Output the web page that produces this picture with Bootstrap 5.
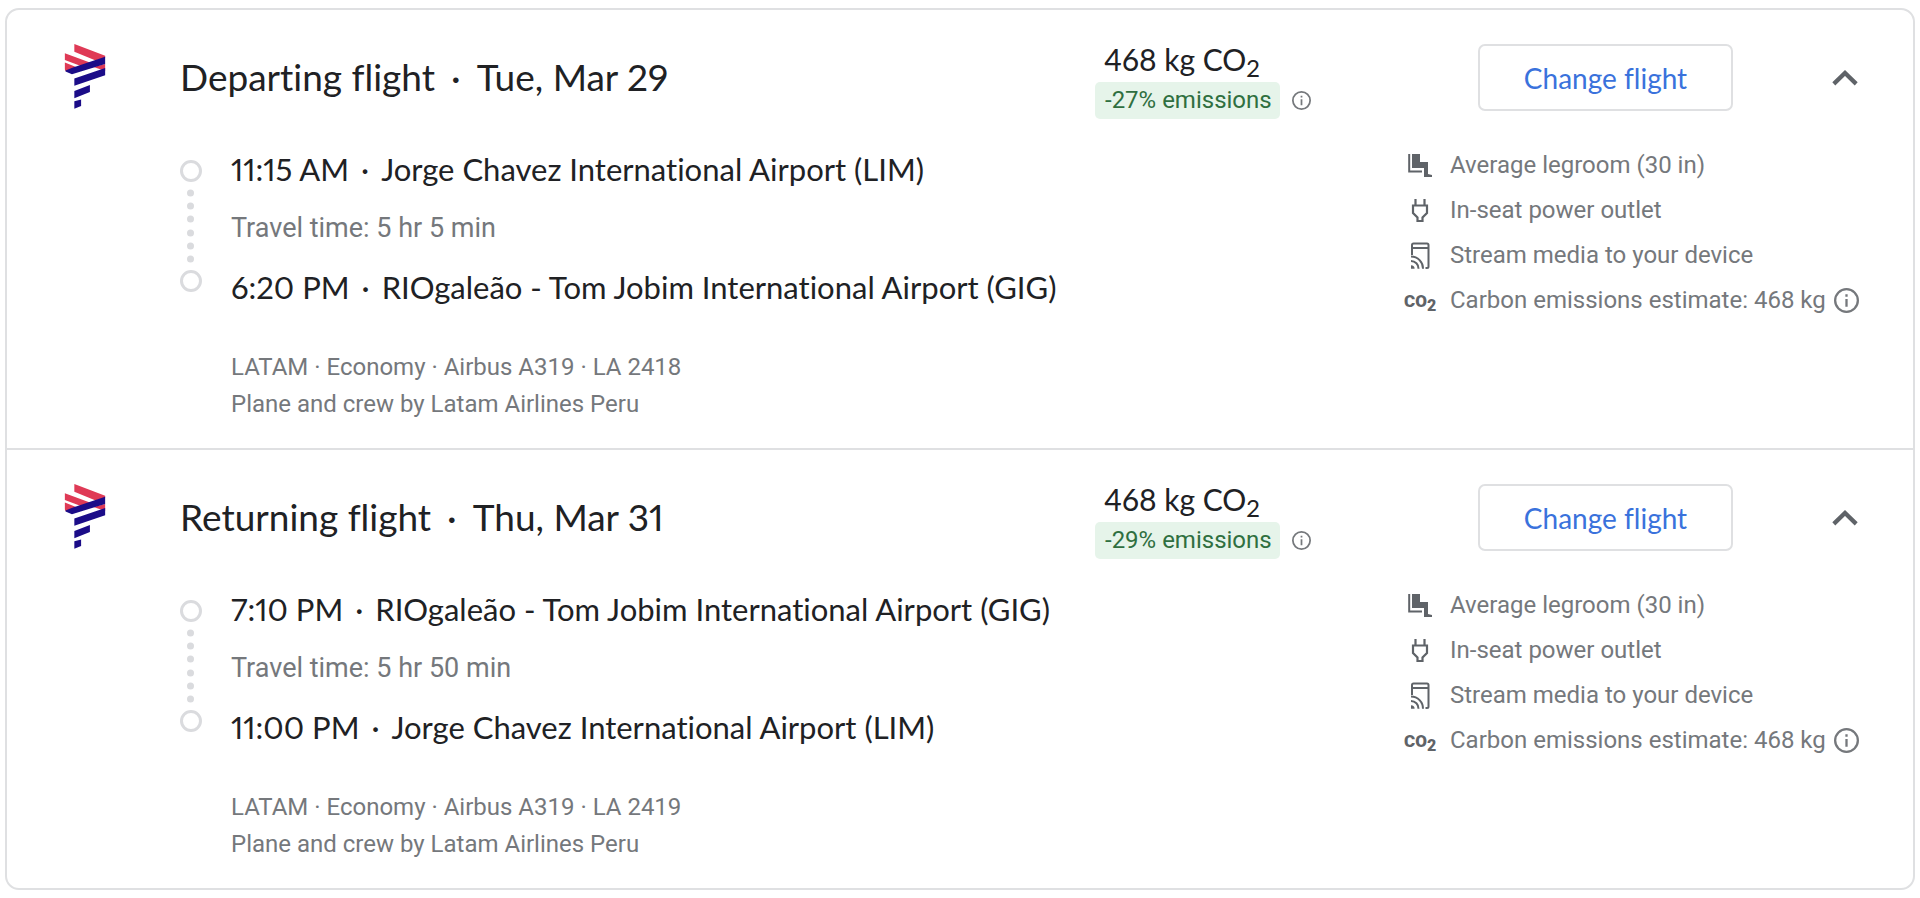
<!DOCTYPE html>
<html lang="en">
<head>
<meta charset="utf-8">
<meta name="viewport" content="width=device-width, initial-scale=1">
<title>Selected flights</title>
<link href="https://cdn.jsdelivr.net/npm/bootstrap@5.3.0/dist/css/bootstrap.min.css" rel="stylesheet">
<style>
  :root { --ink: #202124; --soft: #75787c; --icon: #5f6368; --line: #dfe0e2; --display: Lato, "Liberation Sans", sans-serif; }
  body { font-family: Roboto, "Liberation Sans", sans-serif; color: var(--soft); background: #fff; }
  .trip { margin: 8px 5px 9px; border: 2px solid var(--line); border-radius: 14px; }
  .leg { padding: 34px 0 25px 173px; }
  .leg + .leg { border-top: 2px solid var(--line); }
  .leg-head { margin-left: -116px; }
  .carrier { width: 116px; }
  .leg-title, .stop, .co2-amount, .change-btn { font-family: var(--display); font-variant-ligatures: none; font-variant-numeric: proportional-nums; }
  .leg-title { font-size: 37px; line-height: 65px; color: var(--ink); }
  .leg-title .sep { margin: 0 16px; }
  .co2-block { width: 383px; }
  .co2-amount { font-size: 30px; line-height: 30px; color: var(--ink); padding: 0 0 8px 9px; }
  .co2-amount sub { font-size: 24px; line-height: 0; bottom: -6px; }
  .saving { font-size: 24px; line-height: 37px; padding: 0 8px 0 10px; border-radius: 5px; background: #e6f4ea; color: #2f6f40; }
  .change-btn { width: 255px; height: 67px; font-size: 28px; line-height: 36px; color: #3a72dc; border: 2px solid var(--line); border-radius: 7px; }
  .change-btn:hover { background: #f6f9fe; color: #3a72dc; border-color: var(--line); }
  .fold-col { width: 180px; height: 67px; padding-left: 99px; }
  .leg-body { padding-top: 21px; }
  .route { list-style: none; }
  .stop { font-size: 31px; line-height: 59px; color: var(--ink); }
  .sep { margin: 0 12px; }
  .duration { font-size: 27px; line-height: 59px; }
  .track { width: 51px; padding-top: 20px; }
  .facts { font-size: 24px; line-height: 37px; margin: 32px 0 0 51px; }
  .amenities { width: 509px; padding-top: 3px; }
  .amenities li { font-size: 24px; line-height: 45px; }
  .amenity-icon { width: 32px; margin-right: 14px; color: var(--icon); }
  .co2-mark { font-weight: 900; font-size: 17px; line-height: 18px; }
  .co2-mark sub { font-size: 16px; line-height: 0; bottom: -4px; }
  .plain-btn { border: 0; background: none; padding: 0; color: inherit; line-height: 0; }
</style>
</head>
<body>
<svg class="d-none" aria-hidden="true">
  <symbol id="airline" viewBox="73 42 123 192">
    <path fill="#df3a56" d="M103 42 194 77V82L166 91 103 65ZM75 69 155 99 128 109 75 89ZM75 97 108 110 90 122H77L75 117ZM194 101V122L160 110Z"/>
    <path fill="#1b0c88" d="M194 80V101L96 131 77 123V120L97 112ZM194 113V134L103 165V144ZM149 163V184L103 202V181ZM123 206V225L103 233V211Z"/>
  </symbol>
  <symbol id="track" viewBox="0 0 22 132">
    <g fill="none" stroke="#dadbde" stroke-width="3"><circle cx="11" cy="11" r="9.5"/><circle cx="11" cy="121" r="9.5"/></g>
    <g fill="#dadbde"><circle cx="10.500" cy="33" r="3.500"/><circle cx="10.500" cy="46" r="3.500"/><circle cx="10.500" cy="59" r="3.500"/><circle cx="10.500" cy="73" r="3.500"/><circle cx="10.500" cy="86" r="3.500"/><circle cx="10.500" cy="99" r="3.500"/></g>
  </symbol>
  <symbol id="info" viewBox="0 0 24 24">
    <circle cx="12" cy="12" r="10.900" fill="none" stroke="currentColor" stroke-width="2.200"/><path fill="currentColor" d="M10.900 6h2.200v2.300h-2.200zM10.900 10.500h2.200v7.500h-2.200z"/>
  </symbol>
  <symbol id="chevron" viewBox="0 0 24 15"><path fill="none" stroke="currentColor" stroke-width="4" d="M1.500 13 12 2.800 22.500 13"/></symbol>
  <symbol id="seat" viewBox="0 0 24 24">
    <path fill="none" stroke="currentColor" stroke-width="2" d="M1.200 0V17.500H14"/><path fill="currentColor" d="M4 0H12V8H20V20L24 21V23H16V14H4Z"/>
  </symbol>
  <symbol id="plug" viewBox="0 0 24 24">
    <path fill="none" stroke="currentColor" stroke-width="2.200" d="M7.500 0V6.500M16.500 0V6.500M5 6.500H19V14L14.500 18.500V22H9.500V18.500L5 14Z"/>
  </symbol>
  <symbol id="stream" viewBox="0 0 20 28">
    <path fill="none" stroke="currentColor" stroke-width="2" d="M2 13V3Q2 1.500 3.500 1.500H17Q18.500 1.500 18.500 3V24.500Q18.500 26 17 26H15.500M2 6H18.500M1 14.500A12 12 0 0 1 13 26.800M1 19A7.500 7.500 0 0 1 8.500 26.800"/><path fill="currentColor" d="M1 23.200A3.600 3.600 0 0 1 4.600 26.800H1Z"/>
  </symbol>
</svg>

<main class="trip">
  <section class="leg">
    <header class="leg-head d-flex align-items-start">
      <div class="carrier flex-shrink-0"><svg width="42" height="65" role="img" aria-label="LATAM"><use href="#airline"/></svg></div>
      <h2 class="leg-title flex-grow-1 fw-normal m-0">Departing flight<span class="sep">·</span>Tue, Mar 29</h2>
      <div class="co2-block flex-shrink-0">
        <div class="co2-amount">468 kg CO<sub>2</sub></div>
        <div class="d-flex align-items-center gap-2"><span class="saving">-27% emissions</span><button class="plain-btn ms-1" type="button" aria-label="About emissions"><svg width="19" height="19"><use href="#info"/></svg></button></div>
      </div>
      <button class="btn change-btn flex-shrink-0" type="button">Change flight</button>
      <div class="fold-col d-flex align-items-center flex-shrink-0"><button class="plain-btn" type="button" aria-label="Collapse departing flight"><svg width="26" height="16" color="#5f6368"><use href="#chevron"/></svg></button></div>
    </header>
    <div class="leg-body d-flex">
      <div class="flex-grow-1">
        <div class="d-flex">
          <div class="track flex-shrink-0"><svg class="d-block" width="22" height="132" aria-hidden="true"><use href="#track"/></svg></div>
          <ul class="route p-0 m-0">
            <li class="stop">11:15 AM<span class="sep">·</span>Jorge Chavez International Airport (LIM)</li>
            <li class="duration">Travel time: 5 hr 5 min</li>
            <li class="stop">6:20 PM<span class="sep">·</span>RIOgaleão - Tom Jobim International Airport (GIG)</li>
          </ul>
        </div>
        <div class="facts">LATAM · Economy · Airbus A319 · LA 2418<br>Plane and crew by Latam Airlines Peru</div>
      </div>
      <ul class="amenities list-unstyled flex-shrink-0 mb-0">
        <li class="d-flex align-items-center"><span class="amenity-icon d-flex justify-content-center"><svg width="24" height="24"><use href="#seat"/></svg></span>Average legroom (30 in)</li>
        <li class="d-flex align-items-center"><span class="amenity-icon d-flex justify-content-center"><svg width="24" height="24"><use href="#plug"/></svg></span>In-seat power outlet</li>
        <li class="d-flex align-items-center"><span class="amenity-icon d-flex justify-content-center"><svg width="20" height="28"><use href="#stream"/></svg></span>Stream media to your device</li>
        <li class="d-flex align-items-center"><span class="amenity-icon co2-mark">CO<sub>2</sub></span>Carbon emissions estimate: 468 kg<button class="plain-btn ms-2" type="button" aria-label="About this estimate"><svg width="25" height="25"><use href="#info"/></svg></button></li>
      </ul>
    </div>
  </section>

  <section class="leg">
    <header class="leg-head d-flex align-items-start">
      <div class="carrier flex-shrink-0"><svg width="42" height="65" role="img" aria-label="LATAM"><use href="#airline"/></svg></div>
      <h2 class="leg-title flex-grow-1 fw-normal m-0">Returning flight<span class="sep">·</span>Thu, Mar 31</h2>
      <div class="co2-block flex-shrink-0">
        <div class="co2-amount">468 kg CO<sub>2</sub></div>
        <div class="d-flex align-items-center gap-2"><span class="saving">-29% emissions</span><button class="plain-btn ms-1" type="button" aria-label="About emissions"><svg width="19" height="19"><use href="#info"/></svg></button></div>
      </div>
      <button class="btn change-btn flex-shrink-0" type="button">Change flight</button>
      <div class="fold-col d-flex align-items-center flex-shrink-0"><button class="plain-btn" type="button" aria-label="Collapse returning flight"><svg width="26" height="16" color="#5f6368"><use href="#chevron"/></svg></button></div>
    </header>
    <div class="leg-body d-flex">
      <div class="flex-grow-1">
        <div class="d-flex">
          <div class="track flex-shrink-0"><svg class="d-block" width="22" height="132" aria-hidden="true"><use href="#track"/></svg></div>
          <ul class="route p-0 m-0">
            <li class="stop">7:10 PM<span class="sep">·</span>RIOgaleão - Tom Jobim International Airport (GIG)</li>
            <li class="duration">Travel time: 5 hr 50 min</li>
            <li class="stop">11:00 PM<span class="sep">·</span>Jorge Chavez International Airport (LIM)</li>
          </ul>
        </div>
        <div class="facts">LATAM · Economy · Airbus A319 · LA 2419<br>Plane and crew by Latam Airlines Peru</div>
      </div>
      <ul class="amenities list-unstyled flex-shrink-0 mb-0">
        <li class="d-flex align-items-center"><span class="amenity-icon d-flex justify-content-center"><svg width="24" height="24"><use href="#seat"/></svg></span>Average legroom (30 in)</li>
        <li class="d-flex align-items-center"><span class="amenity-icon d-flex justify-content-center"><svg width="24" height="24"><use href="#plug"/></svg></span>In-seat power outlet</li>
        <li class="d-flex align-items-center"><span class="amenity-icon d-flex justify-content-center"><svg width="20" height="28"><use href="#stream"/></svg></span>Stream media to your device</li>
        <li class="d-flex align-items-center"><span class="amenity-icon co2-mark">CO<sub>2</sub></span>Carbon emissions estimate: 468 kg<button class="plain-btn ms-2" type="button" aria-label="About this estimate"><svg width="25" height="25"><use href="#info"/></svg></button></li>
      </ul>
    </div>
  </section>
</main>
<script src="https://cdn.jsdelivr.net/npm/bootstrap@5.3.0/dist/js/bootstrap.bundle.min.js"></script>
</body>
</html>
